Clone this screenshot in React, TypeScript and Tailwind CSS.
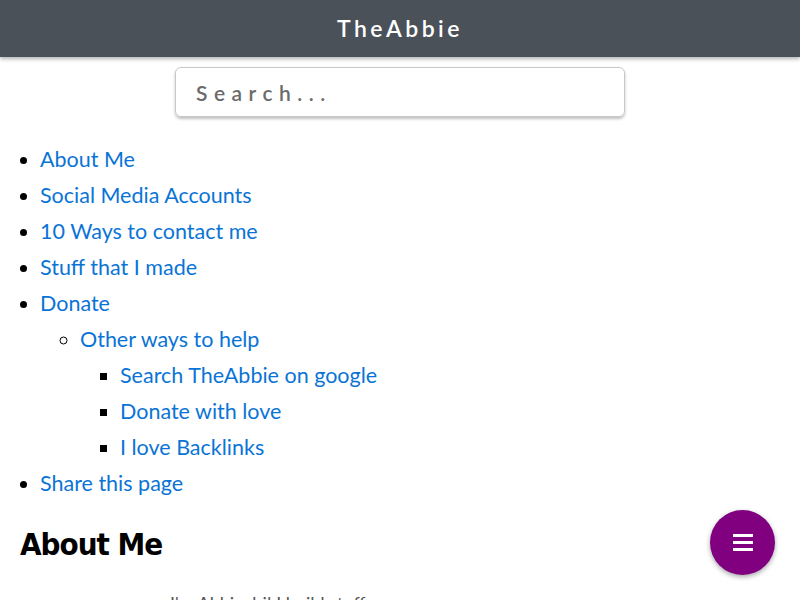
import React from 'react';

const links = ['About Me', 'Social Media Accounts', '10 Ways to contact me', 'Stuff that I made', 'Donate'];
const help = ['Search TheAbbie on google', 'Donate with love', 'I love Backlinks'];

export default function App() {
  return (
    <div className="min-h-screen bg-white" style={{ fontFamily: 'Lato, "Noto Sans", sans-serif' }}>
      <header className="h-[57px] bg-[#4b5159] flex items-center justify-center shadow-[0_2px_4px_rgba(0,0,0,0.3)]">
        <h1 className="text-white text-[23px] font-semibold tracking-[3.5px]">TheAbbie</h1>
      </header>

      <div className="flex justify-center pt-[10px]">
        <input
          placeholder="Search..."
          className="w-[450px] h-[50px] rounded-md border border-[#c8c8c8] shadow-[0_2px_3px_rgba(0,0,0,0.25)] px-5 text-[21px] font-semibold tracking-[6.5px] placeholder:text-[#6b6b6b] outline-none"
        />
      </div>

      <ul className="list-disc pl-10 mt-[24px] text-[21.5px] leading-[36px] text-[#0a74d6]">
        {links.map((l) => (
          <li key={l} className="marker:text-black marker:text-[20px]">
            <a href="#">{l}</a>
          </li>
        ))}
        <ul className="list-[circle] pl-10">
          <li className="marker:text-black marker:text-[20px]">
            <a href="#">Other ways to help</a>
            <ul className="list-[square] pl-10">
              {help.map((h) => (
                <li key={h} className="marker:text-black marker:text-[20px]">
                  <a href="#">{h}</a>
                </li>
              ))}
            </ul>
          </li>
        </ul>
        <li className="marker:text-black marker:text-[20px]">
          <a href="#">Share this page</a>
        </li>
      </ul>

      <h2
        className="px-5 mt-[20px] text-[31px] font-bold tracking-[-1px] text-black"
        style={{ fontFamily: '"DejaVu Sans Condensed", "DejaVu Sans", sans-serif' }}
      >
        About Me
      </h2>
      <p className="pl-[170px] pr-5 mt-[22px] text-[18px] text-[#555]">
        I'm Abbie, hi! I build stuff.
      </p>

      <button
        aria-label="Menu"
        className="fixed right-[25px] top-[510px] w-[65px] h-[65px] rounded-full bg-[#800080] flex flex-col items-center justify-center gap-[4px] shadow-[0_2px_5px_rgba(0,0,0,0.35)]"
      >
        <span className="block w-[20px] h-[3px] bg-white" />
        <span className="block w-[20px] h-[3px] bg-white" />
        <span className="block w-[20px] h-[3px] bg-white" />
      </button>
    </div>
  );
}
